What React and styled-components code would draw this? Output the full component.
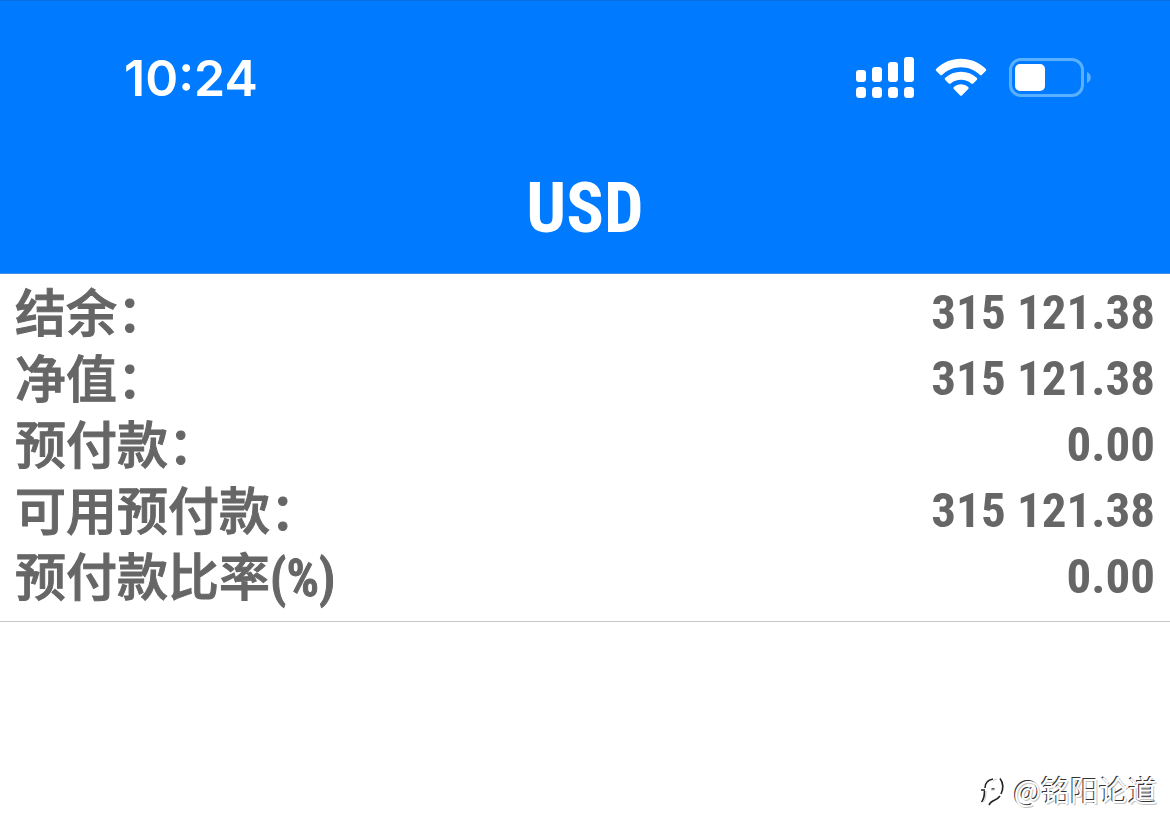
import styled, { createGlobalStyle } from 'styled-components';

const GlobalStyle = createGlobalStyle`
  * {
    box-sizing: border-box;
  }

  body {
    margin: 0;
    background-color: #ffffff;
    font-family: 'Roboto Condensed', 'Liberation Sans', 'Noto Sans CJK SC', sans-serif;
  }
`;

const Page = styled.div`
  display: flex;
  flex-direction: column;
  min-height: 100vh;
`;

const Header = styled.header`
  display: flex;
  flex-direction: column;
  border-top: 1px solid #0a6fe0;
  border-bottom: 1px solid #3c92ee;
  background-color: #007aff;
  color: #ffffff;
`;

const StatusBar = styled.div`
  display: flex;
  justify-content: space-between;
  align-items: center;
  height: 154px;
  padding: 0 79px 0 124px;
`;

const Clock = styled.time`
  font-family: Inter, sans-serif;
  font-size: 50px;
  font-weight: 600;
  line-height: 60px;
`;

const StatusIcons = styled.div`
  display: flex;
  align-items: center;
  gap: 21px;
`;

const Title = styled.h1`
  margin: 0;
  padding: 13px 0 25px;
  text-align: center;
  font-size: 70px;
  font-weight: 700;
  line-height: 80px;
`;

const Summary = styled.dl`
  margin: 0;
  padding: 6px 15px 11px;
  border-bottom: 1px solid #c8c8cb;
  color: #666666;
`;

const Row = styled.div`
  display: flex;
  justify-content: space-between;
  align-items: center;
  height: 66px;
`;

const Label = styled.dt`
  padding-bottom: 6px;
  font-family: 'Noto Sans CJK SC', sans-serif;
  font-size: 51px;
  font-weight: 500;
  line-height: 60px;
  -webkit-text-stroke: 1px currentColor;
`;

const Unit = styled.span`
  font-family: 'Roboto Condensed', sans-serif;
  font-size: 51px;
  font-weight: 600;
  line-height: 1;
`;

const Value = styled.dd`
  margin: 0;
  font-size: 49px;
  font-weight: 700;
  line-height: 60px;
`;

const Watermark = styled.footer`
  display: flex;
  justify-content: flex-end;
  align-items: center;
  gap: 6px;
  margin-top: auto;
  padding: 0 13px 31px;
  color: #ffffff;
  font-family: 'Noto Sans CJK SC', sans-serif;
  font-size: 29px;
  line-height: 40px;
  text-shadow: -1px -1px 0 #333333, 1px 1px 0 #c4c4c4;
`;

const SignalIcon = () => (
  <svg width="60" height="42" viewBox="0 0 60 42" fill="#ffffff" aria-hidden="true">
    <rect x="2" y="13" width="10" height="12" rx="3" />
    <rect x="18" y="10" width="10" height="15" rx="3" />
    <rect x="34" y="5" width="10" height="20" rx="3" />
    <rect x="50" y="0" width="10" height="25" rx="3" />
    <rect x="2" y="30" width="10" height="11" rx="3.5" />
    <rect x="18" y="30" width="10" height="11" rx="3.5" />
    <rect x="34" y="30" width="10" height="11" rx="3.5" />
    <rect x="50" y="30" width="10" height="11" rx="3.5" />
  </svg>
);

const WifiIcon = () => (
  <svg width="52" height="40" viewBox="0 0 52 40" fill="#ffffff" aria-hidden="true">
    <path d="M1.300 10.800C8 4.400 16.500.8 26 .8s18 3.600 24.700 10c.7.7.7 1.500 0 2.200l-3.800 3.800c-.7.700-1.500.7-2.200 0C39.500 12 33.200 9.300 26 9.300S12.500 12 7.300 16.800c-.7.700-1.500.7-2.200 0L1.300 13c-.7-.7-.7-1.500 0-2.200z" />
    <path d="M10.300 19.800C14.500 15.900 20 13.700 26 13.700s11.500 2.200 15.700 6.100c.7.700.7 1.500 0 2.200l-3.400 3.400c-.6.600-1.400.6-2.100 0C33.400 23 30 21.800 26 21.800s-7.400 1.200-10.200 3.600c-.7.600-1.500.6-2.100 0L10.300 22c-.7-.7-.7-1.500 0-2.200z" />
    <path d="M18.900 28.900c2-1.700 4.400-2.600 7.100-2.600s5.100.9 7.100 2.600c.7.600.7 1.400.1 2.100l-6.100 6.200c-.7.700-1.500.7-2.200 0L18.800 31c-.6-.7-.6-1.500.1-2.100z" />
  </svg>
);

const BatteryIcon = () => (
  <svg width="83" height="40" viewBox="0 0 83 40" aria-hidden="true">
    <rect x="2.500" y="1.500" width="72" height="36" rx="10.500" fill="none" stroke="#59b0ff" strokeWidth="3" />
    <path d="M79 14c2.500 1 3.800 3.100 3.800 5.500S81.500 24 79 25z" fill="#59b0ff" />
    <rect x="7" y="6" width="30" height="27" rx="5" fill="#ffffff" />
  </svg>
);

const WatermarkLogo = () => (
  <svg width="28" height="36" viewBox="2 -2 28 36" fill="none" aria-hidden="true">
    <path d="M3 17h4M7 15C7 10 9 7 15 6M6.500 18c0 4-.5 8-3 11M13.500 16h3M22 5.500c3 4 3.500 10 1 15.500M22 23c-2.500 3.500-6 4-8 5.500-1.500 1-2.200 2-3 3.500" stroke="#222222" strokeWidth="1.600" />
    <path d="M8 18c0 5-.5 8-2.500 11M13.500 17h3M15 7.500l4-1.500" stroke="#c4c4c4" />
  </svg>
);

const ROWS = [
  { label: '结余：', value: '315 121.38' },
  { label: '净值：', value: '315 121.38' },
  { label: '预付款：', value: '0.00' },
  { label: '可用预付款：', value: '315 121.38' },
  { label: '预付款比率', unit: '(%)', value: '0.00' },
];

const App = () => {
  return (
    <Page>
      <GlobalStyle />
      <Header>
        <StatusBar>
          <Clock>10:24</Clock>
          <StatusIcons>
            <SignalIcon />
            <WifiIcon />
            <BatteryIcon />
          </StatusIcons>
        </StatusBar>
        <Title>USD</Title>
      </Header>
      <Summary>
        {ROWS.map(({ label, unit, value }) => (
          <Row key={label}>
            <Label>
              {label}
              {unit && <Unit>{unit}</Unit>}
            </Label>
            <Value>{value}</Value>
          </Row>
        ))}
      </Summary>
      <Watermark>
        <WatermarkLogo />
        <span>@铭阳论道</span>
      </Watermark>
    </Page>
  );
};

export default App;
